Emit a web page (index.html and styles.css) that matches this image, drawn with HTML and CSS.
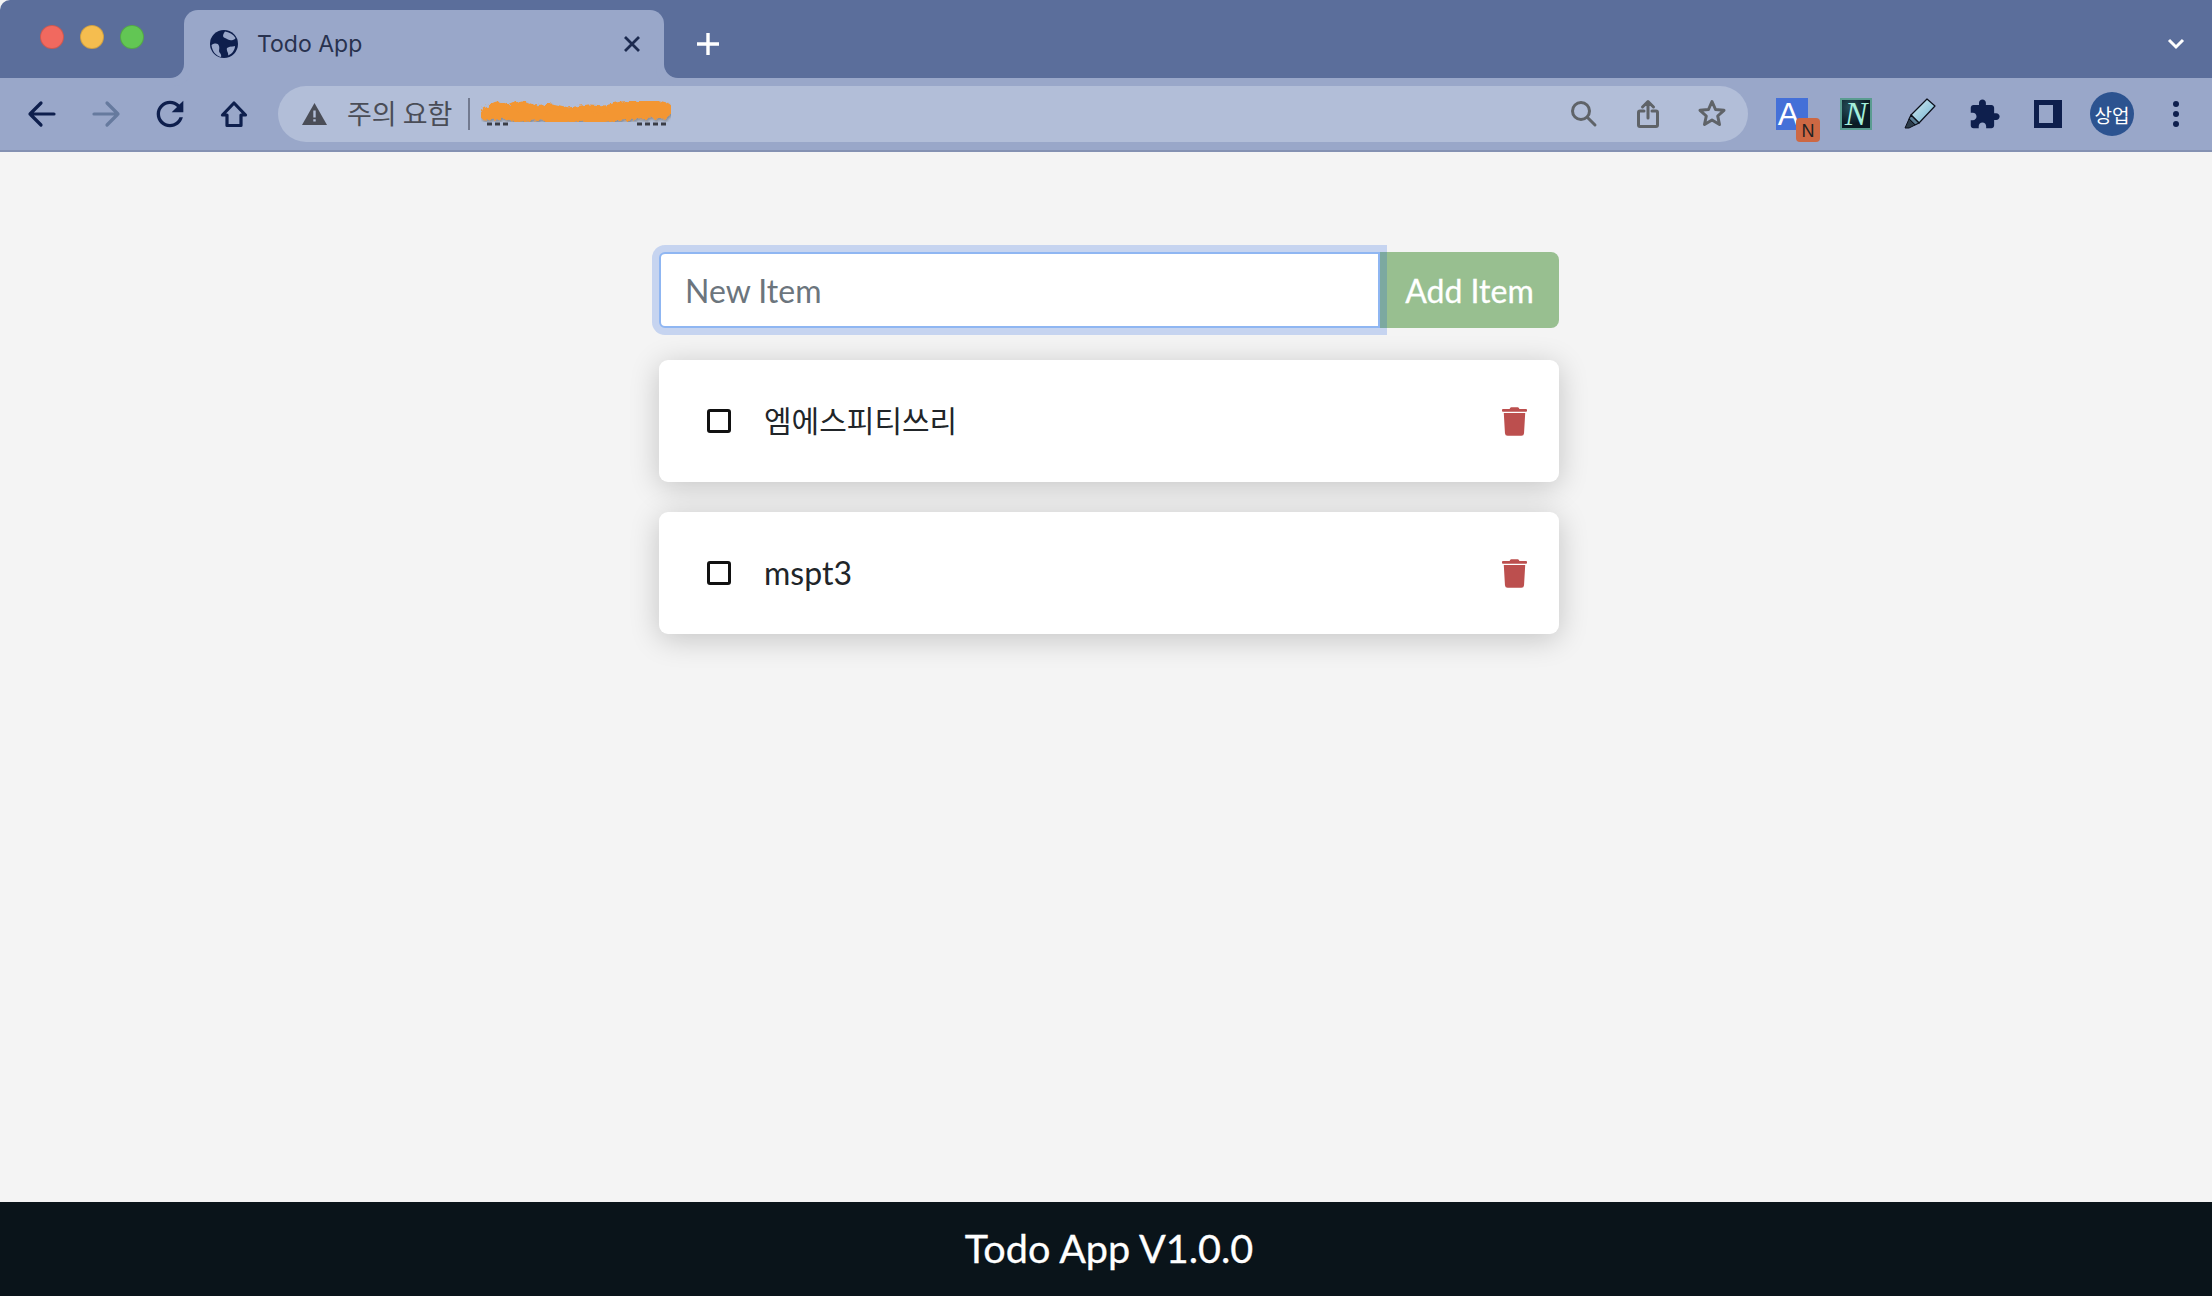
FILE: index.html
```html
<!DOCTYPE html>
<html lang="en">
<head>
    <meta charset="UTF-8">
    <title>Todo App</title>
    <link rel="stylesheet" href="styles.css">
</head>
<body>
    <div class="tabstrip">
        <div class="lights">
            <span class="light light-red"></span>
            <span class="light light-yellow"></span>
            <span class="light light-green"></span>
        </div>
        <div class="tab">
            <svg class="favicon" viewBox="-14 -14 28 28">
                <circle r="14" fill="#0e1f4d"/>
                <path d="M-12.5 1C-9 -1 -6 -1 -5 2C-4 5 -6 7 -4 9C-3 10.500 -2.500 11.500 -3 13C-8 12 -12 7 -12.500 1Z" fill="#99a7c9"/>
                <path d="M1 -12.500C-1 -10 -2 -7 1 -6C4 -5 5 -3 9 -4C10.500 -4.500 11 -5 11.500 -6C9 -10 5 -12 1 -12.500Z" fill="#99a7c9"/>
                <path d="M3 4C6 2 8 3 11 2C11 6 8 10 4 11.500C5 9 2 7 3 4Z" fill="#99a7c9"/>
            </svg>
            <span class="tab-title">Todo App</span>
            <svg class="tab-close" viewBox="0 0 16 16"><path d="M1 1L15 15M15 1L1 15"/></svg>
        </div>
        <svg class="new-tab" viewBox="0 0 24 24"><path d="M12 1V23M1 12H23"/></svg>
        <svg class="tab-list" viewBox="0 0 20 14"><path d="M3 3L10 10L17 3"/></svg>
    </div>

    <div class="toolbar">
        <div class="nav-btn"><svg class="line-icon" viewBox="0 0 32 32"><path d="M4 16H28M15 5L4 16L15 27"/></svg></div>
        <div class="nav-btn"><svg class="line-icon faded" viewBox="0 0 32 32"><path d="M4 16H28M17 5L28 16L17 27"/></svg></div>
        <div class="nav-btn"><svg class="fill-icon" viewBox="0 0 24 24"><path d="M17.65 6.35C16.2 4.9 14.21 4 12 4c-4.42 0-7.99 3.58-7.99 8s3.57 8 7.99 8c3.73 0 6.84-2.55 7.73-6h-2.08c-.82 2.33-3.04 4-5.65 4-3.31 0-6-2.69-6-6s2.690-6 6-6c1.660 0 3.140.69 4.220 1.780L13 11h7V4l-2.350 2.350z"/></svg></div>
        <div class="nav-btn"><svg class="line-icon" viewBox="0 0 32 32"><path d="M16 5L4.500 17H9V27.500H23V17H27.500Z"/></svg></div>

        <div class="omnibox">
            <svg class="warn" viewBox="0 0 25 22">
                <path d="M12.500 0L25 22H0Z" fill="#4a4d57"/>
                <path d="M11.300 7.500H13.700V14.500H11.300ZM11.300 16.200H13.700V18.600H11.300Z" fill="#b2bed8"/>
            </svg>
            <span class="warn-text">주의 요함</span>
            <span class="omni-sep"></span>
            <svg class="scribble" viewBox="0 0 190 32">
                <defs>
                    <filter id="rough" x="-5%" y="-20%" width="110%" height="140%">
                        <feTurbulence type="fractalNoise" baseFrequency="0.22" numOctaves="2" seed="4"/>
                        <feDisplacementMap in="SourceGraphic" scale="7"/>
                        <feDropShadow dx="1" dy="2" stdDeviation="1" flood-color="#3c321e" flood-opacity="0.35"/>
                    </filter>
                </defs>
                <path class="smudge" d="M6 26H30M156 26H186"/>
                <g filter="url(#rough)">
                    <path class="scribble-line" d="M5 14L16 9L28 13L40 8L54 13L70 11L88 15L108 12L124 13L140 9L156 8L170 6L185 10"/>
                    <path class="scribble-line" d="M5 17L22 15L40 19L58 16L78 21L98 17L118 21L136 17L156 16L172 15L185 15"/>
                </g>
            </svg>
            <div class="omni-actions">
                <div class="nav-btn">
                    <svg class="grey-icon" viewBox="0 0 32 32"><circle cx="13" cy="13" r="8.500"/><path d="M19.500 19.500L27 27"/></svg>
                </div>
                <div class="nav-btn">
                    <svg class="grey-icon" viewBox="0 0 32 32"><path d="M12 13H8C7 13 6.500 13.500 6.500 14.500V27C6.500 28 7 28.500 8 28.500H24C25 28.500 25.500 28 25.500 27V14.500C25.500 13.500 25 13 24 13H20M16 20V4M10.500 9L16 3.500L21.500 9"/></svg>
                </div>
                <div class="nav-btn">
                    <svg class="grey-icon" viewBox="0 0 32 32"><path d="M16 3.500L19.500 11.500L28 12.300L21.700 18L23.500 26.500L16 22L8.500 26.500L10.300 18L4 12.300L12.500 11.500Z"/></svg>
                </div>
            </div>
        </div>

        <div class="extensions">
            <div class="ext-slot">
                <div class="ext-translate">A<span class="ext-badge">N</span></div>
            </div>
            <div class="ext-slot">
                <div class="ext-note">N</div>
            </div>
            <div class="ext-slot">
                <svg class="ext-marker" viewBox="0 0 32 32">
                    <defs>
                        <linearGradient id="marker-body" x1="0" y1="0" x2="1" y2="1">
                            <stop offset="0" stop-color="#d5eef4"/>
                            <stop offset="1" stop-color="#6fb0cf"/>
                        </linearGradient>
                    </defs>
                    <path d="M23 1L31 8L15 25L7 17Z" fill="url(#marker-body)" stroke="#0b0f1a" stroke-width="1.200" stroke-linejoin="round"/>
                    <path d="M7 17L15 25L11 27L5 21Z" fill="#5c7f96" stroke="#0b0f1a" stroke-width="1.200" stroke-linejoin="round"/>
                    <path d="M5 21L11 27L5 30L1 30Z" fill="#2c3c4a" stroke="#0b0f1a" stroke-width="1"/>
                </svg>
            </div>
            <div class="ext-slot">
                <svg class="ext-puzzle" viewBox="0 0 24 24"><path d="M20.500 11H19V7c0-1.100-.9-2-2-2h-4V3.500C13 2.120 11.880 1 10.500 1S8 2.120 8 3.500V5H4c-1.100 0-1.990.9-1.990 2v3.800H3.500c1.490 0 2.700 1.210 2.700 2.700s-1.210 2.700-2.700 2.700H2V20c0 1.100.9 2 2 2h3.800v-1.500c0-1.490 1.210-2.700 2.700-2.700 1.490 0 2.700 1.210 2.700 2.700V22H17c1.100 0 2-.9 2-2v-4h1.500c1.380 0 2.500-1.120 2.500-2.500S21.880 11 20.500 11z"/></svg>
            </div>
            <div class="ext-slot"><div class="side-panel"></div></div>
            <div class="ext-slot"><div class="avatar">상업</div></div>
            <div class="ext-slot">
                <div class="menu-dots"><span></span><span></span><span></span></div>
            </div>
        </div>
    </div>

    <main class="content">
        <div class="todo">
            <form class="add-form">
                <input class="add-input" type="text" placeholder="New Item">
                <button class="add-btn" type="button">Add Item</button>
            </form>

            <div class="item">
                <input class="item-check" type="checkbox">
                <span class="item-name item-name-ko">엠에스피티쓰리</span>
                <svg class="trash" viewBox="0 0 448 512"><path d="M432 32H312l-9.400-18.700A24 24 0 0 0 281.100 0H166.800a23.720 23.720 0 0 0-21.400 13.300L136 32H16A16 16 0 0 0 0 48v16a16 16 0 0 0 16 16h416a16 16 0 0 0 16-16V48a16 16 0 0 0-16-16zM53.200 467a48 48 0 0 0 47.900 45h245.800a48 48 0 0 0 47.900-45L416 104H32z"/></svg>
            </div>
            <div class="item">
                <input class="item-check" type="checkbox">
                <span class="item-name">mspt3</span>
                <svg class="trash" viewBox="0 0 448 512"><path d="M432 32H312l-9.400-18.700A24 24 0 0 0 281.100 0H166.800a23.720 23.720 0 0 0-21.400 13.300L136 32H16A16 16 0 0 0 0 48v16a16 16 0 0 0 16 16h416a16 16 0 0 0 16-16V48a16 16 0 0 0-16-16zM53.200 467a48 48 0 0 0 47.900 45h245.800a48 48 0 0 0 47.900-45L416 104H32z"/></svg>
            </div>
        </div>
    </main>

    <footer class="footer">Todo App V1.0.0</footer>
</body>
</html>
```

FILE: styles.css
```css
* {
    box-sizing: border-box;
}
html, body {
    height: 100%;
}
body {
    margin: 0;
    display: flex;
    flex-direction: column;
    overflow: hidden;
    background-color: #f4f4f4;
    font-family: "Lato", "Noto Sans CJK KR", sans-serif;
    color: #212529;
}

/* tab strip */
.tabstrip {
    height: 78px;
    flex: none;
    display: flex;
    padding: 10px 26px 0 40px;
    background-color: #5b6e9b;
    border-top-left-radius: 10px;
}
.lights {
    display: flex;
    gap: 16px;
    padding-top: 15px;
}
.light {
    width: 24px;
    height: 24px;
    border-radius: 50%;
    border: 1px solid rgba(0, 0, 0, 0.15);
}
.light-red {
    background-color: #f1695f;
}
.light-yellow {
    background-color: #f5bd4f;
}
.light-green {
    background-color: #62c654;
}
.tab {
    position: relative;
    width: 480px;
    margin-left: 40px;
    padding: 0 24px 0 26px;
    display: flex;
    align-items: center;
    background-color: #99a7c9;
    border-radius: 14px 14px 0 0;
}
.tab:before, .tab:after {
    content: '';
    position: absolute;
    bottom: 0;
    width: 14px;
    height: 14px;
    background-color: #5b6e9b;
}
.tab:before {
    left: -14px;
    border-bottom-right-radius: 14px;
    box-shadow: 4px 4px 0 4px #99a7c9;
}
.tab:after {
    right: -14px;
    border-bottom-left-radius: 14px;
    box-shadow: -4px 4px 0 4px #99a7c9;
}
.favicon {
    width: 28px;
    height: 28px;
    flex: none;
}
.tab-title {
    margin-left: 19px;
    font-family: "Inter", sans-serif;
    font-size: 23px;
    color: #28324f;
}
.tab-close {
    width: 16px;
    height: 16px;
    margin-left: auto;
    fill: none;
    stroke: #1c2a4f;
    stroke-width: 2.800;
}
.new-tab {
    width: 24px;
    height: 24px;
    margin: 22px 0 0 32px;
    fill: none;
    stroke: #fff;
    stroke-width: 3.400;
}
.tab-list {
    width: 20px;
    height: 14px;
    margin: 27px 0 0 auto;
    fill: none;
    stroke: #fff;
    stroke-width: 3;
}

/* toolbar */
.toolbar {
    height: 74px;
    flex: none;
    display: flex;
    padding: 8px 4px 0 10px;
    background-color: #99a7c9;
    border-bottom: 2px solid #8491b2;
}
.nav-btn {
    width: 64px;
    height: 56px;
    flex: none;
    display: flex;
    align-items: center;
    justify-content: center;
}
.line-icon {
    width: 32px;
    height: 32px;
    fill: none;
    stroke: #0e1f4d;
    stroke-width: 3.200;
    stroke-linecap: round;
    stroke-linejoin: round;
}
.line-icon.faded {
    stroke: #667a9e;
}
.fill-icon {
    width: 40px;
    height: 40px;
    fill: #0e1f4d;
}
.omnibox {
    flex: 1;
    height: 56px;
    margin: 0 12px;
    padding: 0 4px 0 24px;
    display: flex;
    align-items: center;
    background-color: #b2bed8;
    border-radius: 28px;
}
.warn {
    width: 25px;
    height: 22px;
    flex: none;
}
.warn-text {
    margin: -3px 0 0 20px;
    font-family: "Noto Sans CJK KR", sans-serif;
    font-size: 27px;
    color: #4a4d57;
}
.omni-sep {
    width: 2px;
    height: 32px;
    margin-left: 16px;
    background-color: #727a90;
}
.scribble {
    width: 190px;
    height: 32px;
    margin-left: 11px;
}
.scribble-line {
    fill: none;
    stroke: #f39633;
    stroke-width: 11;
    stroke-linejoin: round;
    stroke-linecap: round;
}
.smudge {
    fill: none;
    stroke: #3a3d46;
    stroke-width: 3;
    stroke-dasharray: 5 3;
}
.omni-actions {
    display: flex;
    margin-left: auto;
}
.grey-icon {
    width: 32px;
    height: 32px;
    fill: none;
    stroke: #5f6368;
    stroke-width: 3;
    stroke-linecap: round;
    stroke-linejoin: round;
}

/* extensions */
.extensions {
    display: flex;
    flex: none;
}
.ext-slot {
    width: 64px;
    height: 56px;
    display: flex;
    align-items: center;
    justify-content: center;
}
.ext-translate {
    position: relative;
    width: 32px;
    height: 32px;
    padding-right: 7px;
    background-color: #4470d8;
    color: #fff;
    font-family: "Liberation Sans", sans-serif;
    font-size: 32px;
    line-height: 32px;
    text-align: center;
}
.ext-badge {
    position: absolute;
    left: 20px;
    top: 20px;
    width: 24px;
    height: 24px;
    background-color: #cd6843;
    border-radius: 4px;
    color: #222;
    font-family: "Liberation Sans", sans-serif;
    font-size: 18px;
    font-weight: normal;
    line-height: 26px;
}
.ext-note {
    width: 32px;
    height: 32px;
    background: radial-gradient(circle at 30% 25%, #27505c, #0a1a24 60%);
    border: 2px solid #5a9c90;
    color: #a4f0dc;
    font-family: "Liberation Serif", serif;
    font-size: 34px;
    font-style: italic;
    line-height: 28px;
    text-align: center;
}
.ext-marker {
    width: 32px;
    height: 32px;
}
.ext-puzzle {
    width: 33px;
    height: 33px;
    fill: #0e1f4d;
}
.side-panel {
    width: 28px;
    height: 28px;
    border: 5px solid #0e1f4d;
    border-right-width: 9px;
    background-color: #99a7c9;
}
.avatar {
    width: 44px;
    height: 44px;
    display: flex;
    align-items: center;
    justify-content: center;
    background-color: #2c5390;
    border-radius: 50%;
    color: #fff;
    font-family: "Noto Sans CJK KR", sans-serif;
    font-size: 19px;
}
.menu-dots {
    display: flex;
    flex-direction: column;
    gap: 4px;
}
.menu-dots span {
    width: 6px;
    height: 6px;
    border-radius: 50%;
    background-color: #0e1f4d;
}

/* todo list */
.content {
    flex: 1;
    display: flex;
    justify-content: center;
    padding: 100px 0 0 6px;
}
.todo {
    width: 900px;
}
.add-form {
    display: flex;
    height: 76px;
    margin-bottom: 32px;
}
.add-input {
    position: relative;
    z-index: 1;
    width: 721px;
    padding: 0 24px;
    background-color: #fff;
    border: 2px solid #8fb6f2;
    border-radius: 6px 0 0 6px;
    box-shadow: 0 0 0 7px rgba(13, 85, 225, 0.2);
    outline: none;
    font-family: inherit;
    font-size: 32px;
    color: #495057;
}
.add-input::placeholder {
    color: #6c757d;
}
.add-btn {
    flex: 1;
    padding: 0;
    background-color: #98bf90;
    border: none;
    border-radius: 0 8px 8px 0;
    color: #fff;
    font-family: inherit;
    font-size: 32px;
    -webkit-text-stroke: 0.3px #fff;
}
.item {
    height: 122px;
    margin-bottom: 30px;
    padding: 0 32px 0 48px;
    display: flex;
    align-items: center;
    background-color: #fff;
    border-radius: 9px;
    box-shadow: 0 5px 30px rgba(0, 0, 0, 0.2);
}
.item-check {
    appearance: none;
    width: 24px;
    height: 24px;
    margin: 0 33px 0 0;
    background-color: #fff;
    border: 3px solid #111;
    border-radius: 3px;
}
.item-name {
    flex: 1;
    font-size: 32px;
    line-height: 1;
}
.item-name-ko {
    margin-top: -2px;
    font-size: 30px;
}
.trash {
    width: 25px;
    height: 29px;
    fill: #bc4f4e;
}

.footer {
    height: 94px;
    flex: none;
    display: flex;
    align-items: center;
    justify-content: center;
    padding: 0 0 3px 6px;
    background-color: #0a141a;
    color: #fff;
    font-size: 39.600px;
    -webkit-text-stroke: 0.3px #fff;
}
```
